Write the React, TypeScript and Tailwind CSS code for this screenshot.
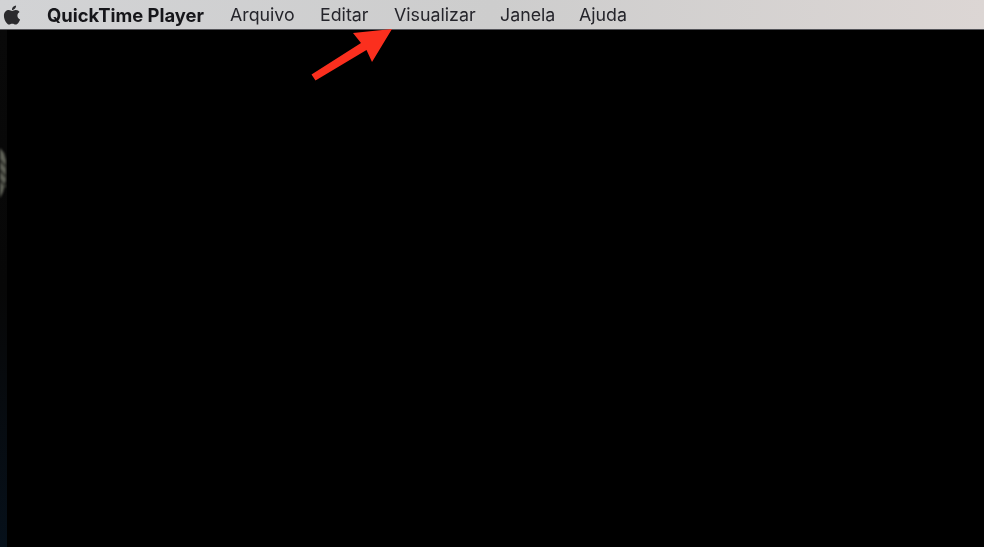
import { FaApple } from "react-icons/fa"

const MENU_ITEMS = [
  { label: "Arquivo", width: "w-[90px]" },
  { label: "Editar", width: "w-[74px]" },
  { label: "Visualizar", width: "w-[106px]" },
  { label: "Janela", width: "w-[79px]" },
  { label: "Ajuda", width: "w-[60px]" },
]

export default function App() {
  return (
    <div className="relative flex h-[547px] w-[984px] flex-col overflow-hidden bg-black font-['Inter',sans-serif]">
      {/* Menu bar */}
      <header className="flex h-[29px] shrink-0 items-center bg-gradient-to-r from-[#d2d3d5] via-[#cdcdcd] to-[#dcd6d4] pt-[2px] text-[17.8px] text-[#25252b]">
        <div className="flex w-[47px] shrink-0 pb-[2px] pl-[2px]">
          <FaApple className="h-[22px] w-[20px] text-[#2a2a2d] blur-[0.4px]" />
        </div>
        <span className="w-[183px] shrink-0 text-[18.4px] font-bold whitespace-nowrap text-[#16161a] blur-[0.4px]">QuickTime Player</span>
        {MENU_ITEMS.map((item) => (
          <span key={item.label} className={`shrink-0 blur-[0.4px] ${item.width}`}>
            {item.label}
          </span>
        ))}
      </header>
      <div className="h-px shrink-0 bg-[#55555a]" />

      {/* Player area with the sliver of desktop on the left */}
      <main className="flex min-h-0 flex-1">
        <div className="relative w-[7px] shrink-0 overflow-hidden bg-gradient-to-b from-[#090909] via-[#070707] to-[#06101a]">
          <svg className="absolute left-0 top-[118px] blur-[1px]" width="7" height="54" viewBox="0 0 7 54">
            <path d="M0 0 L4 5 L6 12 L6 32 L3 44 L0 50 Z" fill="#5f6157" />
            <path d="M0 12 L6 19 M0 22 L6 29 M0 32 L6 39" stroke="#33342e" strokeWidth="2.500" />
          </svg>
        </div>
        <div className="flex-1 bg-black" />
      </main>

      {/* Red arrow */}
      <svg className="absolute left-0 top-0" width="984" height="100" viewBox="0 0 984 100">
        <path
          d="M392 29 L353 33 L361 43 L311.500 74.500 L315.500 80.500 L366.500 50 L372 62 Z"
          fill="#fb2f1e"
        />
      </svg>
    </div>
  )
}
